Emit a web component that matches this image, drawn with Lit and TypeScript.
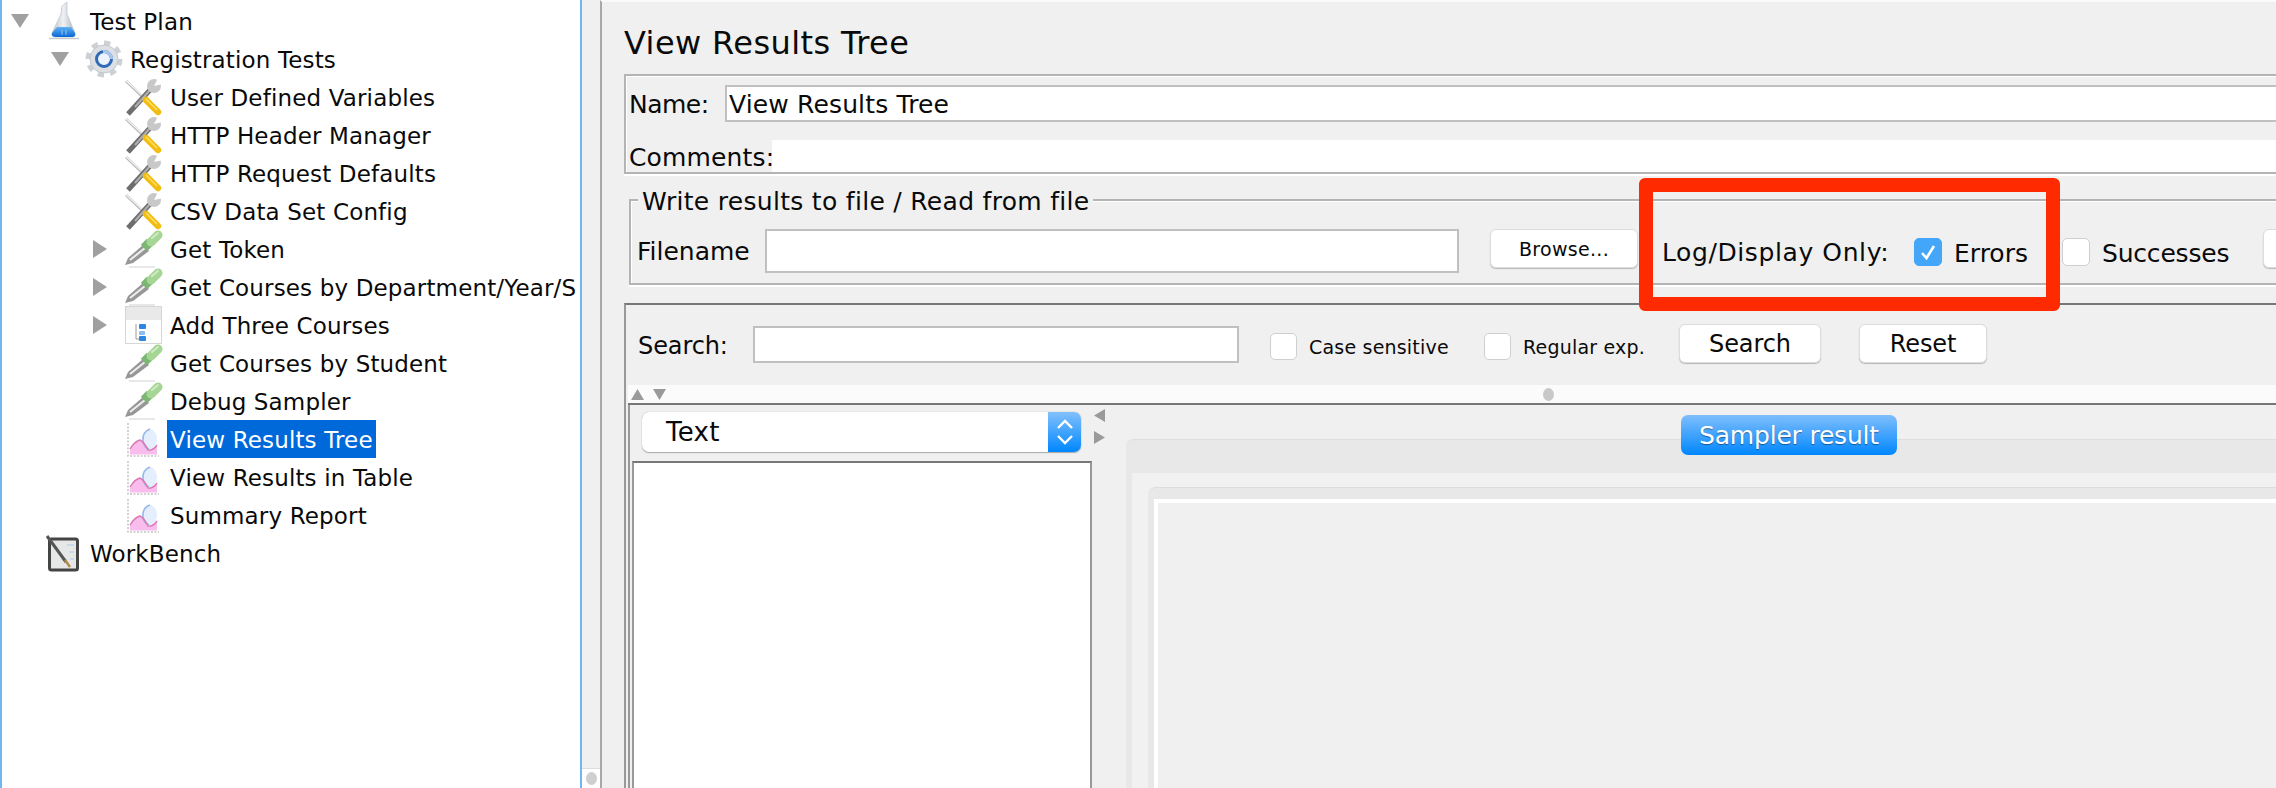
import { LitElement, html, css } from 'lit';
import { customElement } from 'lit/decorators.js';

type IconName = 'flask' | 'gear' | 'tools' | 'dropper' | 'loop' | 'graph' | 'bench';
type TreeRow = { label: string; depth: number; icon: IconName; arrow?: 'down' | 'right'; selected?: boolean };

const rows: TreeRow[] = [
  { label: 'Test Plan', depth: 0, icon: 'flask', arrow: 'down' },
  { label: 'Registration Tests', depth: 1, icon: 'gear', arrow: 'down' },
  { label: 'User Defined Variables', depth: 2, icon: 'tools' },
  { label: 'HTTP Header Manager', depth: 2, icon: 'tools' },
  { label: 'HTTP Request Defaults', depth: 2, icon: 'tools' },
  { label: 'CSV Data Set Config', depth: 2, icon: 'tools' },
  { label: 'Get Token', depth: 2, icon: 'dropper', arrow: 'right' },
  { label: 'Get Courses by Department/Year/S', depth: 2, icon: 'dropper', arrow: 'right' },
  { label: 'Add Three Courses', depth: 2, icon: 'loop', arrow: 'right' },
  { label: 'Get Courses by Student', depth: 2, icon: 'dropper' },
  { label: 'Debug Sampler', depth: 2, icon: 'dropper' },
  { label: 'View Results Tree', depth: 2, icon: 'graph', selected: true },
  { label: 'View Results in Table', depth: 2, icon: 'graph' },
  { label: 'Summary Report', depth: 2, icon: 'graph' },
  { label: 'WorkBench', depth: 0, icon: 'bench' },
];

const icons: Record<IconName, unknown> = {
  flask: html`<svg class="icon" viewBox="0 0 38 38">
    <defs>
      <linearGradient id="liq" x1="0" x2="0" y1="0" y2="1"><stop offset="0" stop-color="#5fb2f4"/><stop offset="1" stop-color="#0a66d6"/></linearGradient>
      <linearGradient id="glass" x1="0" x2="1" y1="0" y2="0"><stop offset="0" stop-color="#bcc3cb"/><stop offset="0.5" stop-color="#eef1f4"/><stop offset="1" stop-color="#aab2bb"/></linearGradient>
    </defs>
    <path d="M17 4L22 0V12L30 31Q31 35 27 35H11Q6 35 7 31L16 12Z" fill="url(#glass)" stroke="#c3c8ce" stroke-width="0.8"/>
    <path d="M12 25H26L30 31Q31 35 27 35H11Q6 35 7 31Z" fill="url(#liq)"/>
    <path d="M17 28V33M21 28V33" stroke="#8cc6f7" stroke-width="1"/>
    <path d="M4 36.5H34" stroke="#c9cccf" stroke-width="1.5"/>
  </svg>`,
  gear: html`<svg class="icon" viewBox="0 0 38 38">
    <circle cx="19" cy="19" r="16" fill="none" stroke="#cdd0d4" stroke-width="5" pathLength="16" stroke-dasharray="1 1"/>
    <circle cx="19" cy="19" r="14" fill="#dcdfe3" stroke="#c3c6cb"/>
    <circle cx="19" cy="19" r="7.5" fill="#eef3fb" stroke="#2f6ab5" stroke-width="3"/>
    <path d="M18 11.5A7.5 7.5 0 0 1 26.5 19" stroke="#a9c6ea" stroke-width="3" fill="none"/>
  </svg>`,
  tools: html`<svg class="icon" viewBox="0 0 38 38">
    <path d="M1 3L21 22" stroke="#bdbdbd" stroke-width="3"/>
    <path d="M1 2.5L21 21" stroke="#f4f4f4" stroke-width="1.2"/>
    <path d="M3 36L25 12" stroke="#6e6e6e" stroke-width="5"/>
    <path d="M10 29L25 12" stroke="#b0b0b0" stroke-width="2"/>
    <circle cx="29" cy="8" r="7" fill="#c8c8c8"/>
    <path d="M29 8L33 0L38 6Z" fill="#fff"/>
    <path d="M21 22L33 34" stroke="#f2bd12" stroke-width="6.5" stroke-linecap="round"/>
    <path d="M21 21L32 32" stroke="#ffdf60" stroke-width="1.5"/>
  </svg>`,
  dropper: html`<svg class="icon" viewBox="0 0 38 38">
    <path d="M4 37H30" stroke="#e0e0e0" stroke-width="1.5"/>
    <path d="M0 35L3 28L18 15L24 21L8 33Z" fill="#979797"/>
    <path d="M5 30L20 18" stroke="#ececec" stroke-width="2.2"/>
    <path d="M19 18L25 12" stroke="#7cb673" stroke-width="9"/>
    <path d="M26 12L33 5" stroke="#a5d695" stroke-width="9" stroke-linecap="round"/>
    <path d="M27 8L33 3" stroke="#cfeac4" stroke-width="2" stroke-linecap="round"/>
  </svg>`,
  loop: html`<svg class="icon" viewBox="0 0 38 38">
    <rect x="0.5" y="0.5" width="36" height="37" fill="#fff" stroke="#d6d6d6"/>
    <rect x="1" y="1" width="35" height="13" fill="#e9e9e9"/>
    <path d="M11 18V33H14" fill="none" stroke="#9a9a9a" stroke-width="1"/>
    <rect x="14" y="18" width="7" height="5" rx="1" fill="#2f86e0"/>
    <rect x="14" y="25" width="6" height="4" rx="1" fill="#8cbdf0"/>
    <rect x="14" y="30" width="7" height="5" rx="1" fill="#2f86e0"/>
  </svg>`,
  graph: html`<svg class="icon" viewBox="0 0 38 38">
    <path d="M3 3V36H34" fill="none" stroke="#c4c4c4" stroke-width="1.5" stroke-dasharray="2 1.5"/>
    <path d="M5 34.5V29Q10 21 15 20Q19 22 23 30Q28 31 32 25V34.5Z" fill="#f8bdec"/>
    <ellipse cx="25" cy="19" rx="7" ry="10" fill="#e4eefc"/>
    <path d="M25 9Q17 12 18 21Q19 27 24 29" fill="none" stroke="#94b9ec" stroke-width="1.6"/>
    <path d="M5 29Q10 21 15 20Q19 22 23 30Q28 31 32 25" fill="none" stroke="#dc78b0" stroke-width="1.4"/>
  </svg>`,
  bench: html`<svg class="icon" viewBox="0 0 38 38">
    <rect x="4.5" y="5" width="28" height="31" rx="2" fill="#e6e8e8" stroke="#444" stroke-width="3"/>
    <path d="M22 11H29M24 18H29M25 25H29" stroke="#bcd4ee" stroke-width="1.5"/>
    <path d="M2 2L21 28" stroke="#565656" stroke-width="3"/>
    <path d="M20 26L25 33" stroke="#b08a4e" stroke-width="2.5"/>
  </svg>`,
};

const arrows = {
  down: html`<svg class="arrow" viewBox="0 0 18 14"><path d="M0 0H18L9 14Z"/></svg>`,
  right: html`<svg class="arrow right" viewBox="0 0 14 18"><path d="M0 0L14 9L0 18Z"/></svg>`,
};

@customElement('app-root')
export class AppRoot extends LitElement {
  static styles = css`
    :host {
      display: block;
      width: 2276px;
      height: 788px;
      overflow: hidden;
      background: #f0f0f0;
      color: #0a0a0a;
      font-family: 'DejaVu Sans', sans-serif;
      font-size: 25px;
    }
    .app {
      position: relative;
      display: flex;
      height: 788px;
    }
    .tree {
      flex: none;
      width: 578px;
      padding-top: 2px;
      overflow: hidden;
      background: #fff;
      border-left: 2px solid #6db8f2;
      border-right: 2px solid #6db8f2;
      font-size: 23px;
      letter-spacing: 0.15px;
    }
    .row {
      display: flex;
      align-items: center;
      height: 38px;
      white-space: nowrap;
    }
    .twisty {
      flex: none;
      width: 43px;
      height: 38px;
      display: flex;
      align-items: center;
      padding-left: 9px;
      box-sizing: border-box;
    }
    .arrow {
      width: 18px;
      height: 14px;
      fill: #a0a0a0;
    }
    .arrow.right {
      width: 14px;
      height: 18px;
      margin-left: 2px;
    }
    .icon {
      flex: none;
      width: 38px;
      height: 38px;
      filter: blur(0.4px);
    }
    .label {
      margin-left: 4px;
      padding: 2px 3px 0 3px;
      line-height: 36px;
    }
    .label.selected {
      background: #0069da;
      color: #fff;
    }
    .gutter {
      flex: none;
      width: 18px;
      display: flex;
      flex-direction: column;
      justify-content: flex-end;
    }
    .corner {
      height: 19px;
      background: #fff;
      border-top: 1px solid #ddd;
      display: flex;
      align-items: center;
      justify-content: center;
    }
    .corner i {
      width: 11px;
      height: 13px;
      border-radius: 50%;
      background: #cfcfcf;
    }
    .main {
      flex: 1;
      min-width: 0;
      display: flex;
      flex-direction: column;
      border-left: 2px solid #a8a8a8;
      border-top: 2px solid #fafafa;
      padding-left: 22px;
      overflow: hidden;
    }
    .title {
      height: 62px;
      padding-top: 10px;
      flex: none;
      display: flex;
      align-items: center;
      font-size: 32px;
      letter-spacing: 0.4px;
    }
    .namebox {
      flex: none;
      height: 96px;
      border: 2px solid #b4b4b4;
      border-right: none;
      box-shadow: inset 1px 1px 0 #fff, 0 2px 0 #fff;
      padding-left: 3px;
      display: flex;
      flex-direction: column;
      letter-spacing: 0.15px;
    }
    .namerow {
      display: flex;
      align-items: center;
      margin-top: 9px;
      height: 37px;
    }
    .namerow span {
      flex: none;
      width: 96px;
      padding-top: 2px;
      letter-spacing: -0.5px;
    }
    .field {
      flex: 1;
      height: 37px;
      box-sizing: border-box;
      background: #fff;
      border: 2px solid #c0c0c0;
      border-right: none;
      padding: 2px 0 0 2px;
      line-height: 31px;
      white-space: nowrap;
    }
    .commentrow {
      display: flex;
      align-items: center;
      margin-top: 18px;
      height: 32px;
    }
    .commentrow span {
      flex: none;
      width: 143px;
      padding-top: 2px;
    }
    .commentrow div {
      flex: 1;
      height: 32px;
      background: #fff;
    }
    .group {
      flex: none;
      margin: 25px 0 0 5px;
      height: 82px;
      border: 2px solid #b4b4b4;
      border-right: none;
      box-shadow: inset 1px 1px 0 #fff, 0 2px 0 #fff;
    }
    .legend {
      width: fit-content;
      margin: -15px 0 0 7px;
      padding: 3px 4px 0;
      height: 25px;
      line-height: 25px;
      letter-spacing: 0.3px;
      background: #f0f0f0;
    }
    .filerow {
      display: flex;
      align-items: center;
      height: 44px;
      margin-top: 15px;
      padding-left: 6px;
      white-space: nowrap;
    }
    .filerow .name {
      flex: none;
      width: 128px;
    }
    .fileinput {
      flex: none;
      width: 694px;
      height: 44px;
      box-sizing: border-box;
      background: #fff;
      border: 2px solid #c0c0c0;
    }
    .btn {
      flex: none;
      box-sizing: border-box;
      height: 39px;
      background: #fff;
      border: 1px solid #dcdcdc;
      border-radius: 6px;
      box-shadow: 0 1px 1px #b8b8b8;
      display: flex;
      align-items: center;
      justify-content: center;
    }
    .filerow .btn {
      align-self: flex-start;
    }
    .browse {
      width: 148px;
      margin-left: 31px;
      font-size: 19px;
      letter-spacing: 0.3px;
    }
    .only {
      flex: none;
      width: 252px;
      margin: 2px 0 0 24px;
      letter-spacing: 0.6px;
    }
    .check {
      flex: none;
      box-sizing: border-box;
      width: 28px;
      height: 28px;
      margin-top: 2px;
      background: #fff;
      border: 1px solid #cfcfcf;
      border-radius: 5px;
      display: flex;
      align-items: center;
      justify-content: center;
    }
    .check.on {
      background: #44a6f9;
      border-color: #44a6f9;
    }
    .check svg {
      width: 18px;
      height: 18px;
    }
    .opt {
      flex: none;
      margin: 4px 0 0 12px;
    }
    .errors {
      width: 108px;
    }
    .successes {
      width: 161px;
      letter-spacing: -0.2px;
    }
    .nextbtn {
      width: 80px;
    }
    .results {
      flex: 1;
      min-height: 0;
      margin-top: 18px;
      border-top: 2px solid #777;
      border-left: 2px solid #999;
      display: flex;
      flex-direction: column;
    }
    .searchrow {
      flex: none;
      display: flex;
      align-items: center;
      height: 39px;
      margin-top: 19px;
      padding-left: 12px;
      white-space: nowrap;
      font-size: 24px;
      letter-spacing: -0.1px;
    }
    .searchrow .name {
      flex: none;
      width: 115px;
      padding-top: 4px;
    }
    .searchinput {
      flex: none;
      width: 486px;
      height: 37px;
      margin-top: 2px;
      box-sizing: border-box;
      background: #fff;
      border: 2px solid #c0c0c0;
    }
    .searchrow .check {
      margin-top: 6px;
      width: 27px;
      height: 27px;
    }
    .small {
      flex: none;
      font-size: 19px;
      letter-spacing: 0.2px;
      margin: 6px 0 0 12px;
    }
    .case {
      margin-left: 31px !important;
    }
    .casetext {
      width: 139px;
    }
    .regular {
      margin-left: 36px !important;
    }
    .regulartext {
      width: 122px;
    }
    .search {
      width: 142px;
      margin-left: 34px;
    }
    .reset {
      width: 128px;
      margin-left: 38px;
    }
    .band {
      flex: none;
      position: relative;
      height: 18px;
      margin: 22px 0 0 2px;
      background: #fbfbfb;
      border-bottom: 2px solid #777;
      display: flex;
      align-items: center;
      gap: 9px;
      padding-left: 3px;
    }
    .tri {
      flex: none;
      width: 13px;
      height: 11px;
      fill: #9a9a9a;
    }
    .knob {
      width: 11px;
      height: 13px;
      margin-left: 868px;
      border-radius: 50%;
      background: #c8c8c8;
    }
    .lower {
      flex: 1;
      min-height: 0;
      margin-left: 2px;
      border-left: 2px solid #999;
      display: flex;
    }
    .left {
      flex: none;
      width: 462px;
      display: flex;
      flex-direction: column;
    }
    .select {
      flex: none;
      box-sizing: border-box;
      height: 40px;
      width: 439px;
      margin: 7px 0 0 12px;
      background: #fff;
      border-radius: 7px;
      box-shadow: 0 0 1px #999, 0 1px 1px #aaa;
      display: flex;
      align-items: center;
      justify-content: space-between;
      padding-left: 24px;
      overflow: hidden;
      font-size: 26px;
      letter-spacing: 0.3px;
    }
    .spin {
      width: 33px;
      height: 40px;
      background: linear-gradient(#82c0fc, #0087ff);
      display: flex;
      align-items: center;
      justify-content: center;
    }
    .spin svg {
      width: 18px;
      height: 30px;
    }
    .list {
      flex: 1;
      margin: 9px 0 0 2px;
      background: #fff;
      border-top: 2px solid #777;
      border-left: 2px solid #999;
      border-right: 2px solid #999;
    }
    .splitter {
      flex: none;
      width: 34px;
      box-sizing: border-box;
      padding: 4px 0 0 2px;
      display: flex;
      flex-direction: column;
      gap: 9px;
    }
    .splitter svg {
      width: 11px;
      height: 13px;
      fill: #9a9a9a;
    }
    .tabs {
      position: relative;
      flex: 1;
      min-width: 0;
      margin-top: 34px;
      background: #e8e8e8;
      border-top: 1px solid #ddd;
      border-top-left-radius: 8px;
      padding: 33px 0 0 6px;
      display: flex;
    }
    .tabbody {
      flex: 1;
      background: #f1f1f1;
      padding: 14px 0 0 16px;
      display: flex;
    }
    .inner {
      flex: 1;
      background: #e8e8e8;
      border-top: 1px solid #ddd;
      border-top-left-radius: 8px;
      padding: 11px 0 0 6px;
      display: flex;
    }
    .innermost {
      flex: 1;
      background: #f0f0f0;
      border-top: 4px solid #fff;
      border-left: 4px solid #fff;
    }
    .pill {
      position: absolute;
      left: 555px;
      top: -25px;
      width: 216px;
      height: 40px;
      border-radius: 7px;
      background: linear-gradient(#7fbefc, #0087ff);
      color: #fff;
      letter-spacing: -0.2px;
      text-shadow: 0 1px 1px rgba(0, 0, 0, 0.4);
      display: flex;
      align-items: center;
      justify-content: center;
      white-space: nowrap;
    }
    .callout {
      position: absolute;
      left: 1639px;
      top: 178px;
      width: 421px;
      height: 133px;
      box-sizing: border-box;
      border: 14px solid #ff2a00;
      border-radius: 6px;
    }
  `;

  render() {
    return html`
      <div class="app">
        <div class="tree">
          ${rows.map(
            (r) => html`
              <div class="row" style="padding-left:${r.depth * 40}px">
                <div class="twisty">${r.arrow ? arrows[r.arrow] : ''}</div>
                ${icons[r.icon]}
                <span class="label ${r.selected ? 'selected' : ''}">${r.label}</span>
              </div>
            `
          )}
        </div>
        <div class="gutter"><div class="corner"><i></i></div></div>
        <div class="main">
          <div class="title">View Results Tree</div>
          <div class="namebox">
            <div class="namerow"><span>Name:</span><div class="field">View Results Tree</div></div>
            <div class="commentrow"><span>Comments:</span><div></div></div>
          </div>
          <div class="group">
            <div class="legend">Write results to file / Read from file</div>
            <div class="filerow">
              <span class="name">Filename</span>
              <div class="fileinput"></div>
              <div class="btn browse">Browse...</div>
              <span class="only">Log/Display Only:</span>
              <div class="check on">
                <svg viewBox="0 0 18 18"><path d="M3 10L7.5 15L15 3" fill="none" stroke="#fff" stroke-width="2.6"/></svg>
              </div>
              <span class="opt errors">Errors</span>
              <div class="check"></div>
              <span class="opt successes">Successes</span>
              <div class="btn nextbtn"></div>
            </div>
          </div>
          <div class="results">
            <div class="searchrow">
              <span class="name">Search:</span>
              <div class="searchinput"></div>
              <div class="check case"></div>
              <span class="small casetext">Case sensitive</span>
              <div class="check regular"></div>
              <span class="small regulartext">Regular exp.</span>
              <div class="btn search">Search</div>
              <div class="btn reset">Reset</div>
            </div>
            <div class="band">
              <svg class="tri" viewBox="0 0 13 11"><path d="M0 11L6.5 0L13 11Z"/></svg>
              <svg class="tri" viewBox="0 0 13 11"><path d="M0 0H13L6.5 11Z"/></svg>
              <div class="knob"></div>
            </div>
            <div class="lower">
              <div class="left">
                <div class="select">
                  <span>Text</span>
                  <div class="spin">
                    <svg viewBox="0 0 18 30"><path d="M2 11L9 4L16 11M2 19L9 26L16 19" fill="none" stroke="#fff" stroke-width="2.4"/></svg>
                  </div>
                </div>
                <div class="list"></div>
              </div>
              <div class="splitter">
                <svg viewBox="0 0 11 13"><path d="M11 0V13L0 6.5Z"/></svg>
                <svg viewBox="0 0 11 13"><path d="M0 0V13L11 6.5Z"/></svg>
              </div>
              <div class="tabs">
                <div class="pill">Sampler result</div>
                <div class="tabbody">
                  <div class="inner"><div class="innermost"></div></div>
                </div>
              </div>
            </div>
          </div>
        </div>
        <div class="callout"></div>
      </div>
    `;
  }
}

declare global {
  interface HTMLElementTagNameMap {
    'app-root': AppRoot;
  }
}
